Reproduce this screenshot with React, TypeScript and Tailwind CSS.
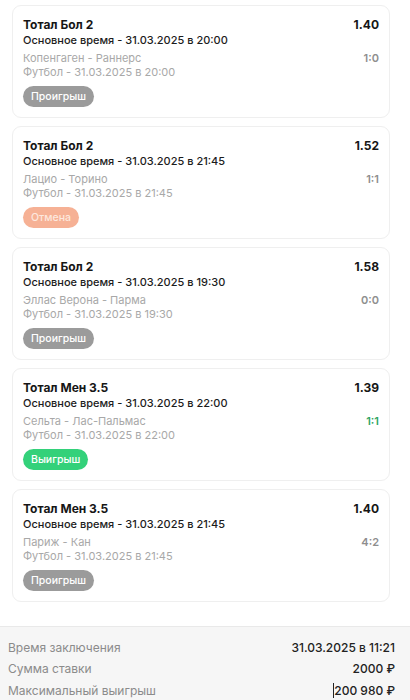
type Status = 'lose' | 'cancel' | 'win';

interface Bet {
  market: string;
  period: string;
  odds: string;
  match: string;
  sport: string;
  score: string;
  status: Status;
}

const bets: Bet[] = [
  { market: 'Тотал Бол 2', period: 'Основное время - 31.03.2025 в 20:00', odds: '1.40', match: 'Копенгаген - Раннерс', sport: 'Футбол - 31.03.2025 в 20:00', score: '1:0', status: 'lose' },
  { market: 'Тотал Бол 2', period: 'Основное время - 31.03.2025 в 21:45', odds: '1.52', match: 'Лацио - Торино', sport: 'Футбол - 31.03.2025 в 21:45', score: '1:1', status: 'cancel' },
  { market: 'Тотал Бол 2', period: 'Основное время - 31.03.2025 в 19:30', odds: '1.58', match: 'Эллас Верона - Парма', sport: 'Футбол - 31.03.2025 в 19:30', score: '0:0', status: 'lose' },
  { market: 'Тотал Мен 3.5', period: 'Основное время - 31.03.2025 в 22:00', odds: '1.39', match: 'Сельта - Лас-Пальмас', sport: 'Футбол - 31.03.2025 в 22:00', score: '1:1', status: 'win' },
  { market: 'Тотал Мен 3.5', period: 'Основное время - 31.03.2025 в 21:45', odds: '1.40', match: 'Париж - Кан', sport: 'Футбол - 31.03.2025 в 21:45', score: '4:2', status: 'lose' },
];

const badge: Record<Status, { label: string; cls: string }> = {
  lose: { label: 'Проигрыш', cls: 'bg-[#9b9b9b] text-white' },
  cancel: { label: 'Отмена', cls: 'bg-[#f6b195] text-[#fde8de]' },
  win: { label: 'Выигрыш', cls: 'bg-[#33d17a] text-white' },
};

function BetCard({ bet }: { bet: Bet }) {
  const b = badge[bet.status];
  return (
    <div className="bg-white border border-[#efefef] rounded-[9px] px-[10px] pt-[11px] pb-[10px]">
      <div className="flex justify-between items-center h-[16px]">
        <span className="text-[12px] font-bold text-[#161616]">{bet.market}</span>
        <span className="text-[12px] font-bold text-[#161616]">{bet.odds}</span>
      </div>
      <div className="h-[15px] flex items-center text-[11px] font-medium text-[#1c1c1c]">{bet.period}</div>
      <div className="mt-[3px] flex justify-between items-center h-[14px]">
        <span className="text-[11px] text-[#a8a8a8]">{bet.match}</span>
        <span className={`text-[11px] font-semibold ${bet.status === 'win' ? 'text-[#2ea562]' : 'text-[#8e8e8e]'}`}>{bet.score}</span>
      </div>
      <div className="h-[14px] flex items-center text-[11px] text-[#a8a8a8]">{bet.sport}</div>
      <div className="mt-[7px] flex">
        <span className={`h-[21px] px-[8px] rounded-full flex items-center text-[10.5px] font-medium ${b.cls}`}>{b.label}</span>
      </div>
    </div>
  );
}

export default function App() {
  return (
    <div className="w-[410px] h-[700px] overflow-hidden bg-white" style={{ fontFamily: 'Inter, "Noto Sans", sans-serif' }}>
      <div className="pl-[12px] pr-[20px] pt-[5px] flex flex-col gap-[8px]">
        {bets.map((bet, i) => (
          <BetCard key={i} bet={bet} />
        ))}
      </div>
      <div className="mt-[24px] bg-[#f6f6f6] border-t border-[#e9e9e9] pl-[8px] pr-[15px] pt-[10px] text-[12px]">
        <div className="flex justify-between items-center h-[21.5px]">
          <span className="text-[#8b8b8b]">Время заключения</span>
          <span className="text-[#222] font-medium">31.03.2025 в 11:21</span>
        </div>
        <div className="flex justify-between items-center h-[21.5px]">
          <span className="text-[#8b8b8b]">Сумма ставки</span>
          <span className="text-[#222] font-medium">2000 ₽</span>
        </div>
        <div className="flex justify-between items-center h-[21.5px]">
          <span className="text-[#8b8b8b]">Максимальный выигрыш</span>
          <span className="text-[#222] font-medium flex items-center">
            <span className="w-px h-[15px] bg-[#222]" />
            200 980 ₽
          </span>
        </div>
      </div>
    </div>
  );
}
